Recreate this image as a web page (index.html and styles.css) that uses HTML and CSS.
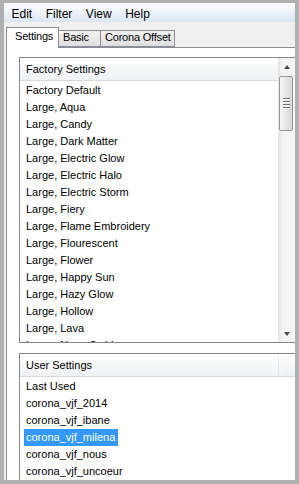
FILE: index.html
```html
<!DOCTYPE html>
<html>
<head>
    <title>Settings</title>
    <meta charset="utf-8">
    <link rel="stylesheet" href="styles.css">
</head>

<body>
  <div class="frame">
    <div class="menubar">
      <span class="menu-item">Edit</span>
      <span class="menu-item">Filter</span>
      <span class="menu-item">View</span>
      <span class="menu-item">Help</span>
    </div>

    <div class="tabs">
      <div class="tab active">Settings</div>
      <div class="tab basic">Basic</div>
      <div class="tab offset">Corona Offset</div>
    </div>

    <div class="panel">
      <div class="listbox factory">
        <div class="list-main">
          <div class="list-header">Factory Settings</div>
          <ul class="rows">
            <li><span>Factory Default</span></li>
            <li><span>Large, Aqua</span></li>
            <li><span>Large, Candy</span></li>
            <li><span>Large, Dark Matter</span></li>
            <li><span>Large, Electric Glow</span></li>
            <li><span>Large, Electric Halo</span></li>
            <li><span>Large, Electric Storm</span></li>
            <li><span>Large, Fiery</span></li>
            <li><span>Large, Flame Embroidery</span></li>
            <li><span>Large, Flourescent</span></li>
            <li><span>Large, Flower</span></li>
            <li><span>Large, Happy Sun</span></li>
            <li><span>Large, Hazy Glow</span></li>
            <li><span>Large, Hollow</span></li>
            <li><span>Large, Lava</span></li>
            <li><span>Large, Neon Swirl</span></li>
          </ul>
        </div>
        <div class="scrollbar">
          <div class="sb-btn"><i class="arrow-up"></i></div>
          <div class="sb-track">
            <div class="thumb">
              <div class="grip"><b></b><b></b><b></b><b></b></div>
            </div>
          </div>
          <div class="sb-btn"><i class="arrow-down"></i></div>
        </div>
      </div>

      <div class="listbox user">
        <div class="list-main">
          <div class="list-header">
            <span class="col">User Settings</span>
            <span class="col-rest"></span>
          </div>
          <ul class="rows">
            <li><span>Last Used</span></li>
            <li><span>corona_vjf_2014</span></li>
            <li><span>corona_vjf_ibane</span></li>
            <li class="selected"><span>corona_vjf_milena</span></li>
            <li><span>corona_vjf_nous</span></li>
            <li><span>corona_vjf_uncoeur</span></li>
          </ul>
        </div>
      </div>
    </div>
  </div>
</body>
</html>
```

FILE: styles.css
```css
html, body {
    margin: 0;
    padding: 0;
}

body {
    background-color: #b0b0b0;
    font-family: "Liberation Sans", Arial, sans-serif;
    color: #000;
}

.frame {
    width: 299px;
    height: 484px;
    box-sizing: border-box;
    border: 4px solid #b0b0b0;
    border-top-width: 3px;
    background-color: #f0f0f0;
    overflow: hidden;
    display: flex;
    flex-direction: column;
}

/* menu */
.menubar {
    height: 19px;
    box-sizing: border-box;
    padding-top: 3px;
    padding-left: 1px;
    font-size: 12px;
    line-height: 16px;
    background: linear-gradient(#fbfcfe, #f1f4fa 40%, #dce6f4);
    display: flex;
    flex-shrink: 0;
}

.menu-item {
    padding: 0 6.5px;
    margin-right: 0.5px;
}

/* tabs */
.tabs {
    height: 26px;
    padding-left: 2px;
    display: flex;
    align-items: flex-end;
    flex-shrink: 0;
    font-size: 11px;
    letter-spacing: -0.2px;
}

.tab {
    box-sizing: border-box;
    border: 1px solid #898c95;
    border-left: none;
    height: 17px;
    margin-bottom: 1px;
    line-height: 13px;
    padding-left: 4px;
    white-space: nowrap;
    background: linear-gradient(#f4f4f4, #e9e9e9 50%, #dedede);
}

.tab.active {
    position: relative;
    z-index: 1;
    width: 53px;
    height: 21px;
    margin-bottom: 0;
    border-left: 1px solid #898c95;
    border-bottom: none;
    padding-left: 8px;
    padding-top: 1px;
    line-height: 14px;
    background: #fff;
}

.tab.basic {
    width: 42px;
}

.tab.offset {
    width: 74px;
}

.panel {
    flex: 1;
    margin-top: -1px;
    margin-left: 2px;
    border-top: 1px solid #898c95;
    border-left: 1px solid #898c95;
    background: #fff;
    padding-left: 12px;
    padding-top: 9px;
}

/* list boxes */
.listbox {
    display: flex;
    border: 1px solid #828790;
    border-right: none;
    font-size: 11px;
    background: #fff;
}

.listbox.factory {
    height: 286px;
    box-sizing: border-box;
}

.listbox.user {
    margin-top: 10px;
    height: 200px;
}

.list-main {
    flex: 1;
    overflow: hidden;
}

.list-header {
    height: 23px;
    box-sizing: border-box;
    padding-top: 1px;
    line-height: 21px;
    padding-left: 6px;
    border-bottom: 1px solid #d8d8d8;
    background: linear-gradient(#ffffff, #f7f8f9 50%, #f0f1f3);
    white-space: nowrap;
}

.user .list-header {
    display: flex;
    padding-left: 0;
}

.user .col {
    width: 259px;
    padding-left: 6px;
    box-sizing: border-box;
    border-right: 1px solid #e6e7e9;
}

.user .col-rest {
    flex: 1;
    border-left: 1px solid #f8f8f8;
    margin-left: 2px;
}

.rows {
    list-style: none;
    margin: 0;
    padding: 1px 0 0 4px;
}

.rows li {
    height: 17px;
    line-height: 17px;
    white-space: nowrap;
}

.rows span {
    display: inline-block;
    padding: 0 3px 0 2px;
}

.rows li.selected span {
    background-color: #3399ff;
    color: #fff;
}

/* scrollbar */
.scrollbar {
    width: 17px;
    display: flex;
    flex-direction: column;
    background: linear-gradient(to right, #e3e3e3, #f3f3f3 25%, #f5f5f5);
}

.sb-btn {
    height: 17px;
    flex-shrink: 0;
    display: flex;
    align-items: center;
    justify-content: center;
}

.arrow-up, .arrow-down {
    width: 0;
    height: 0;
    border-left: 3.5px solid transparent;
    border-right: 3.5px solid transparent;
}

.arrow-up {
    border-bottom: 4px solid #4a4a4a;
}

.arrow-down {
    border-top: 4px solid #4a4a4a;
}

.sb-track {
    flex: 1;
    padding-top: 1px;
}

.thumb {
    width: 14px;
    height: 55px;
    margin-left: 1px;
    box-sizing: border-box;
    border: 1px solid #959595;
    border-radius: 2px;
    background: linear-gradient(to right, #f6f6f6, #e8e8e8 50%, #d6d6d6);
    display: flex;
    align-items: center;
    justify-content: center;
}

.grip {
    display: flex;
    flex-direction: column;
    gap: 1px;
}

.grip b {
    display: block;
    width: 7px;
    height: 1px;
    background: #707070;
    border-bottom: 1px solid #fafafa;
}
```
